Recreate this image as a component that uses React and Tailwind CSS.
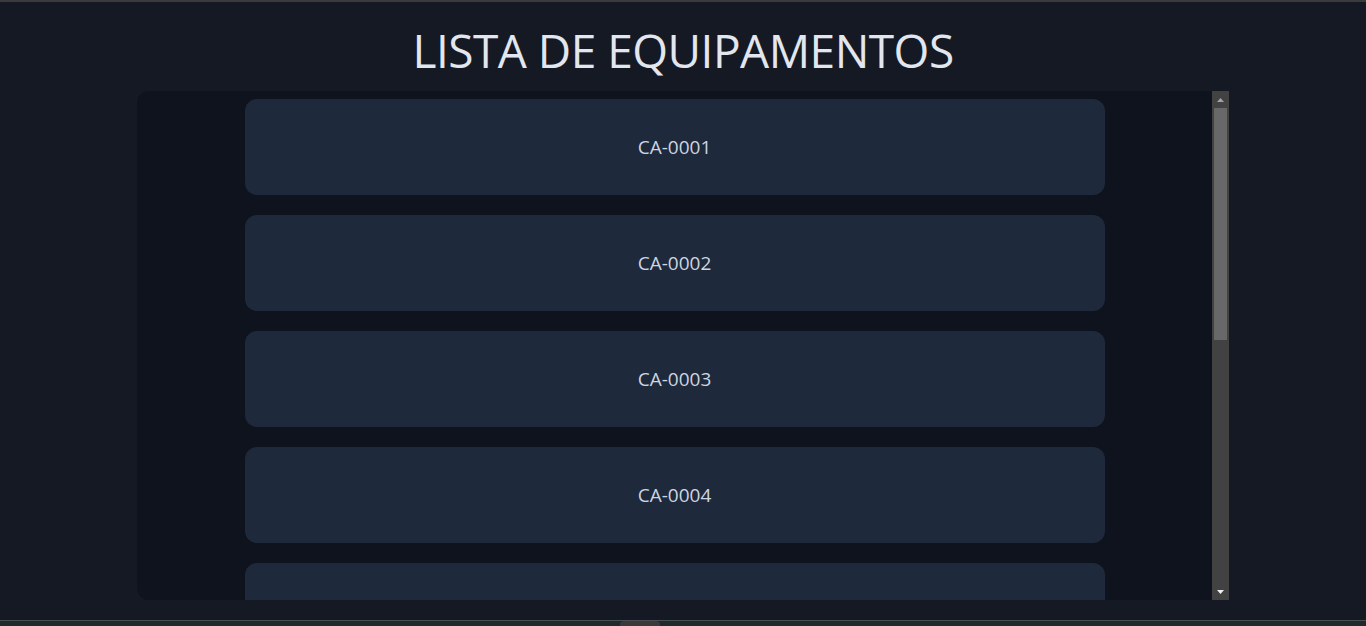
const equipamentos = ["CA-0001", "CA-0002", "CA-0003", "CA-0004", "CA-0005"];

function Scrollbar() {
  return (
    <div className="flex w-[17px] shrink-0 flex-col bg-[#424242]">
      <div className="flex h-[17px] items-center justify-center">
        <svg width="7" height="4" viewBox="0 0 7 4">
          <path d="M3.5 0 L7 4 L0 4 Z" fill="#a3a3a3" />
        </svg>
      </div>
      <div className="mx-[2px] h-[232px] bg-[#686868]" />
      <div className="flex-1" />
      <div className="flex h-[17px] items-center justify-center">
        <svg width="7" height="4" viewBox="0 0 7 4">
          <path d="M0 0 L7 0 L3.5 4 Z" fill="#f0f0f0" />
        </svg>
      </div>
    </div>
  );
}

export default function App() {
  return (
    <div
      className="flex h-[626px] w-full flex-col overflow-hidden bg-[#151924]"
      style={{ fontFamily: '"Open Sans", "Noto Sans", sans-serif' }}
    >
      <div className="h-[2px] shrink-0 bg-[#3b3b3b]" />

      <h1 className="mt-[24px] h-[65px] shrink-0 text-center text-[46px] leading-[48px] font-normal tracking-[-0.5px] text-[#e2e6ee]">
        LISTA DE EQUIPAMENTOS
      </h1>

      <div className="mx-auto flex h-[509px] w-[1092px] shrink-0 overflow-hidden rounded-l-xl bg-[#0e131d]">
        <div className="flex flex-1 flex-col items-center gap-5 overflow-hidden pt-2">
          {equipamentos.map((item) => (
            <div
              key={item}
              className="flex h-24 w-4/5 shrink-0 items-center justify-center rounded-xl bg-[#1e293b] text-[19px] text-[#cdd5e0]"
            >
              {item}
            </div>
          ))}
        </div>
        <Scrollbar />
      </div>

      <div className="flex-1" />
      <div className="relative h-[6px] shrink-0 border-t border-[#4a4f52] bg-[#1f2a2c]">
        <div className="absolute left-[620px] top-0 h-[5px] w-[40px] rounded-t bg-[#3a3a3a]" />
      </div>
    </div>
  );
}
